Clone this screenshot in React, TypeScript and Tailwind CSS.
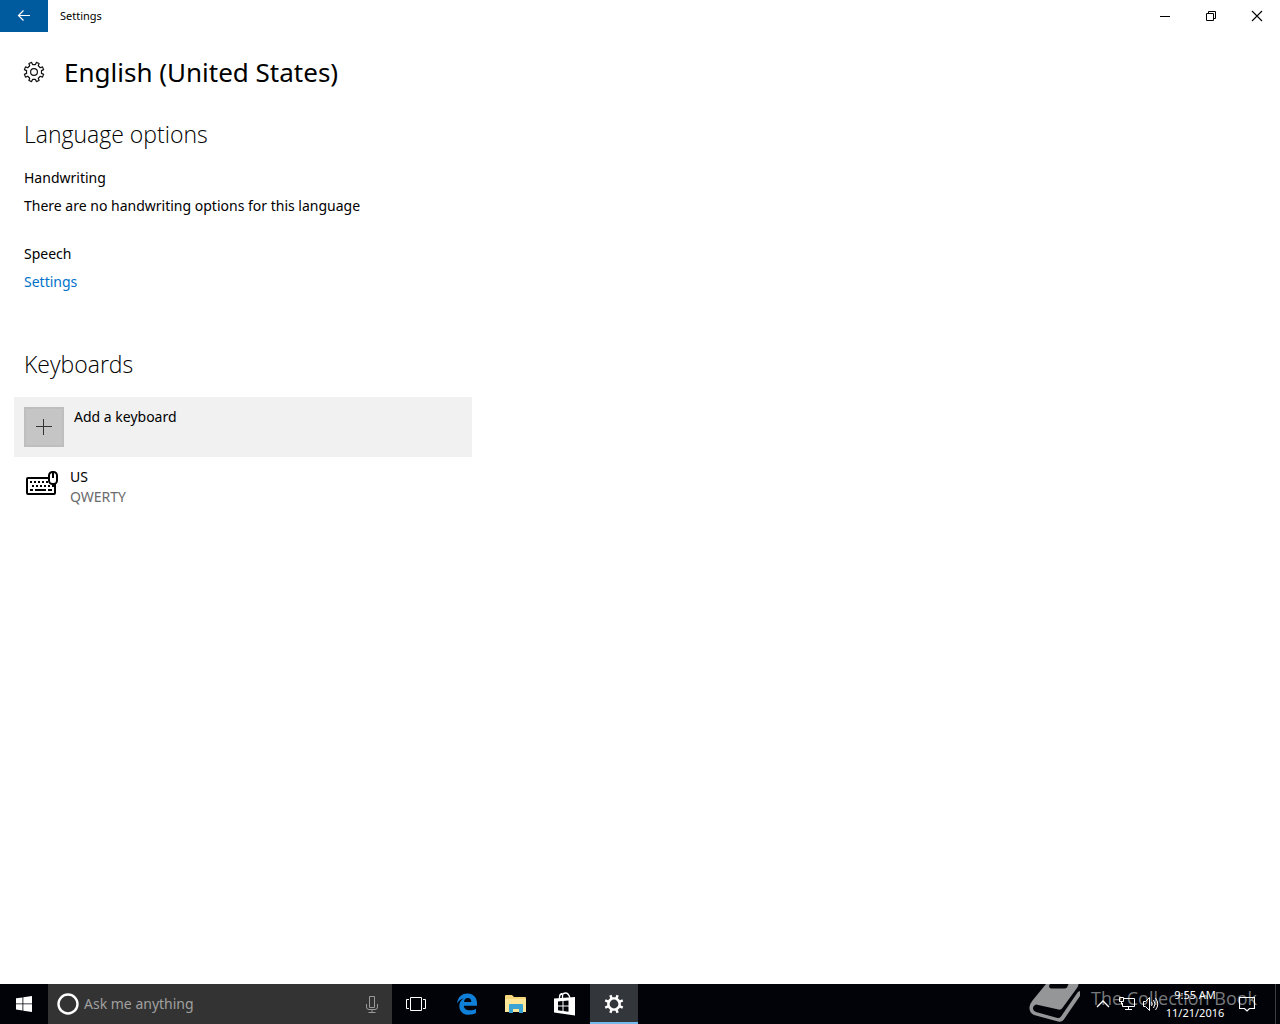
import type { ReactNode } from "react";

const gearPath = (teeth: number, outer: number, inner: number, tip: number, base: number) => {
  const step = (Math.PI * 2) / teeth;
  const point = (r: number, a: number) => `${(12 + r * Math.sin(a)).toFixed(2)} ${(12 - r * Math.cos(a)).toFixed(2)}`;
  let d = "";
  for (let i = 0; i < teeth; i++) {
    const a = (i + 0.5) * step;
    d += `${i === 0 ? "M" : "L"}${point(inner, a - step * base)}`;
    d += `L${point(outer, a - step * tip)}L${point(outer, a + step * tip)}`;
    d += `L${point(inner, a + step * base)}`;
  }
  return d + "Z";
};

const GearOutline = () => (
  <svg className="size-6" viewBox="0 0 24 24" fill="none" stroke="#111" strokeWidth="1.2" strokeLinejoin="round" aria-hidden>
    <path d={gearPath(8, 9.9, 7.6, 0.19, 0.26)} />
    <circle cx="12" cy="12" r="3.4" />
  </svg>
);

const GearSolid = () => (
  <svg className="size-6" viewBox="0 0 24 24" aria-hidden>
    <path d={gearPath(8, 9.6, 7, 0.17, 0.22) + "M12 7.6a4.4 4.4 0 1 0 0 8.8a4.4 4.4 0 1 0 0-8.8Z"} fill="#fff" fillRule="evenodd" />
  </svg>
);

const KeyboardIcon = () => (
  <svg className="h-7 w-9 shrink-0" viewBox="0 0 36 28" fill="none" aria-hidden>
    <rect x="3" y="11" width="28" height="16" rx="1" stroke="#000" strokeWidth="2" />
    <path
      d="M6 15h2m2 0h2m2 0h2m2 0h2m2 0h2M8 19h2m2 0h2m2 0h2m2 0h2m2 0h2m2 0h2M6 23h3m2 0h11m2 0h4"
      stroke="#000"
      strokeWidth="2"
    />
    <rect x="25" y="5" width="8" height="12" rx="3.5" fill="#fff" stroke="#000" strokeWidth="2" />
    <path d="M29 6v5" stroke="#000" strokeWidth="2" />
  </svg>
);

const BookLogo = () => (
  <svg className="h-10 w-13" viewBox="0 0 52 40" aria-hidden>
    <path
      d="M17 0h32.5q0 2-1.5 4L33 24.5q-1 1.500-3.500 1L7 20.5q-3.500 1.500-3 4.500.5 2 3 3l21.5 6q2 .5 3.500-1.500L47.5 10q1-2.500 3.500-3v5L34.5 36q-2 2.500-5.500 1.500L5 31q-5-2-4.500-8 .5-3.500 3-6.500Z"
      fill="#949698"
    />
    <path d="M21 0h18.5l-1.500 3.500q-1 1-2.500 1H22q-2-.5-2-2.500Z" fill="#05070a" />
  </svg>
);

const CaptionButton = ({ label, children }: { label: string; children: ReactNode }) => (
  <button className="flex h-8 w-[46px] items-center justify-center" aria-label={label}>
    <svg className="size-3" viewBox="0 0 12 12" fill="none" stroke="#000" aria-hidden>
      {children}
    </svg>
  </button>
);

const TitleBar = () => (
  <header className="flex h-8 items-center">
    <button className="flex h-8 w-12 items-center justify-center bg-[#005a9e]" aria-label="Back">
      <svg className="size-4" viewBox="0 0 16 16" fill="none" stroke="#fff" strokeWidth="1.2" aria-hidden>
        <path d="M14 7.5H2.5M7.5 2.5l-5 5 5 5" />
      </svg>
    </button>
    <span className="flex-1 pl-3 text-[11px]">Settings</span>
    <CaptionButton label="Minimize">
      <path d="M1 6.5h10" />
    </CaptionButton>
    <CaptionButton label="Restore">
      <path d="M1.5 3.5h7v7h-7zM3.5 3.5v-2h7v7h-2" />
    </CaptionButton>
    <CaptionButton label="Close">
      <path d="M1 1l10 10M11 1L1 11" strokeWidth="1.1" />
    </CaptionButton>
  </header>
);

const TaskButton = ({ label, active, children }: { label: string; active?: boolean; children: ReactNode }) => (
  <button
    className={`flex h-10 w-12 items-center justify-center ${active ? "border-b-2 border-[#76b9ed] bg-[#33363a] pt-0.5" : ""}`}
    aria-label={label}
  >
    {children}
  </button>
);

const Taskbar = () => (
  <footer className="relative flex h-10 items-center bg-[#010308] text-white">
    <TaskButton label="Start">
      <svg className="size-4" viewBox="0 0 16 16" fill="#fff" aria-hidden>
        <path d="M0 2.3l6.5-.9v6.1H0zM7.3 1.3L16 0v7.5H7.3zM0 8.3h6.5v6.2L0 13.6zM7.3 8.3H16V16l-8.7-1.3z" />
      </svg>
    </TaskButton>
    <div className="flex h-10 w-[344px] items-center bg-[#333] pl-2 pr-3">
      <svg className="size-6 shrink-0" viewBox="0 0 24 24" fill="none" aria-hidden>
        <circle cx="12" cy="12" r="9.5" stroke="#fff" strokeWidth="2.4" />
      </svg>
      <input
        className="min-w-0 flex-1 bg-transparent pl-1 text-sm outline-none placeholder:text-[#a0a0a0]"
        type="text"
        aria-label="Search"
        placeholder="Ask me anything"
      />
      <button aria-label="Speak to search">
        <svg className="h-5 w-4" viewBox="0 0 16 20" fill="none" stroke="#9a9a9a" aria-hidden>
          <path d="M5.5 2.5h5v11h-5zM2.5 10v3q0 2.5 2.5 2.5h6q2.5 0 2.5-2.5v-3M8 15.5V18M4.5 18.5h7" />
        </svg>
      </button>
    </div>
    <TaskButton label="Task View">
      <svg className="h-4 w-5" viewBox="0 0 20 16" fill="none" stroke="#fff" aria-hidden>
        <path d="M4.5 1.5h11v13h-11zM3 3.5H.5v9H3M17 3.5h2.5v9H17" />
      </svg>
    </TaskButton>
    <div className="flex gap-px pl-[3px]">
      <TaskButton label="Microsoft Edge">
        <svg className="size-6" viewBox="0 0 24 24" aria-hidden>
          <path
            d="M2 11.2C3 4.8 7 1.5 12.4 1.5c6.4 0 9.6 4.6 9.6 9.6v2.6H8.8c.2 3.2 2.7 4.6 6 4.6 2.4 0 4.4-.6 6.2-1.6v4.4c-2 1.1-4.4 1.7-7.2 1.7-5.9 0-9.5-3.6-9.5-8.8 0-3.3 1.7-6.1 4.7-7.8C6.200 6.9 3.800 8.600 2 11.2Zm7-1.3h7.3c0-2.5-1.2-4-3.5-4-2.1 0-3.5 1.6-3.8 4Z"
            fill="#0f7fd8"
          />
        </svg>
      </TaskButton>
      <TaskButton label="File Explorer">
        <svg className="size-6" viewBox="0 0 24 24" aria-hidden>
          <path d="M1 4q0-1 1-1h6l2 2h11q1 0 1 1v14H1Z" fill="#f5d67a" />
          <path d="M1 7h21v13H1Z" fill="#ffe799" />
          <path d="M5 21v-8q0-1 1-1h12q1 0 1 1v8h-4v-4H9v4Z" fill="#3ba4d4" />
        </svg>
      </TaskButton>
      <TaskButton label="Store">
        <svg className="size-6" viewBox="0 0 24 24" aria-hidden>
          <path d="M6.5 7V5q0-3 3-3.5M9.5 6V4q0-3 3-3t4.5 5" fill="none" stroke="#fff" strokeWidth="1.3" />
          <path
            d="M1 6.5L22 5v18.5L1 20.5ZM5 9.5v4h4.5v-4.4Zm5.5-.5v4.500h5V8.6ZM5 14.5v3.8l4.5.6v-4.4Zm5.5 0v4.5l5 .7v-5.2Z"
            fill="#fff"
            fillRule="evenodd"
          />
        </svg>
      </TaskButton>
      <TaskButton label="Settings" active>
        <GearSolid />
      </TaskButton>
    </div>

    <div className="absolute right-[23px] top-0 flex h-10 items-start gap-2.5 font-['Open_Sans',sans-serif] text-[#77797c]">
      <BookLogo />
      <span className="pt-0.5 text-lg leading-6">The Collection Book</span>
    </div>

    <div className="relative ml-auto flex h-10 items-center pr-[21px]">
      <button className="flex h-10 w-6 items-center justify-center" aria-label="Show hidden icons">
        <svg className="size-4" viewBox="0 0 16 16" fill="none" stroke="#fff" strokeWidth="1.3" aria-hidden>
          <path d="M2 11l6-6 6 6" />
        </svg>
      </button>
      <button className="flex h-10 w-6 items-center justify-center" aria-label="Network">
        <svg className="size-4" viewBox="0 0 16 16" fill="none" stroke="#fff" aria-hidden>
          <path d="M5 2.5h10.5v8H3.5V7M.5 1.5h4v4h-4zM2.5 5.5v3M9.5 10.5v3M6 13.5h7" />
        </svg>
      </button>
      <button className="flex h-10 w-6 items-center justify-center" aria-label="Volume">
        <svg className="h-4 w-[18px]" viewBox="0 0 18 16" fill="none" stroke="#fff" aria-hidden>
          <path d="M1.5 5.5h2l4-4v13l-4-4h-2zM9.5 6q1.5 2 0 4M11.5 4q3 4 0 8M13.5 2q4.5 6 0 12" />
        </svg>
      </button>
      <time className="w-16 text-center text-[11px] leading-[18px]">
        9:55 AM
        <br />
        11/21/2016
      </time>
      <button className="ml-2 flex h-10 w-6 items-center justify-center" aria-label="Action Center">
        <svg className="size-4" viewBox="0 0 16 16" fill="none" stroke="#fff" strokeWidth="1.2" aria-hidden>
          <path d="M.5 1.5h15v11h-5l-2.5 2.5-2.5-2.5h-5z" />
        </svg>
      </button>
    </div>
    <span className="absolute right-1 top-0 h-10 w-px bg-[#3c3e42]" />
  </footer>
);

export default function App() {
  return (
    <div className="flex min-h-screen flex-col bg-white font-['Noto_Sans',sans-serif] text-sm leading-5 text-black">
      <TitleBar />
      <main className="flex-1 px-6 pt-5">
        <div className="-ml-0.5 flex items-center gap-[18px]">
          <GearOutline />
          <h1 className="text-[26px] leading-10">English (United States)</h1>
        </div>

        <section className="pt-6">
          <h2 className="font-['Open_Sans',sans-serif] text-[23px] font-light leading-9">Language options</h2>
          <h3 className="pt-4">Handwriting</h3>
          <p className="pt-2">There are no handwriting options for this language</p>
          <h3 className="pt-7">Speech</h3>
          <p className="pt-2">
            <a className="text-[#0072c9]" href="#speech">
              Settings
            </a>
          </p>
        </section>

        <section className="pt-[54px]">
          <h2 className="font-['Open_Sans',sans-serif] text-[23px] font-light leading-9">Keyboards</h2>
          <button className="-ml-2.5 mt-[15px] flex w-full max-w-[458px] items-start gap-2.5 bg-[#f1f1f1] p-2.5 text-left">
            <span className="flex size-10 items-center justify-center border-2 border-[#bebebe] bg-[#c5c5c5]">
              <svg className="size-4" viewBox="0 0 16 16" stroke="#333" aria-hidden>
                <path d="M7.5 0v16M0 7.5h16" />
              </svg>
            </span>
            <span>Add a keyboard</span>
          </button>
          <div className="flex gap-2.5 pt-2.5">
            <KeyboardIcon />
            <div>
              <p>US</p>
              <p className="text-[#6b6b6b]">QWERTY</p>
            </div>
          </div>
        </section>
      </main>
      <Taskbar />
    </div>
  );
}
